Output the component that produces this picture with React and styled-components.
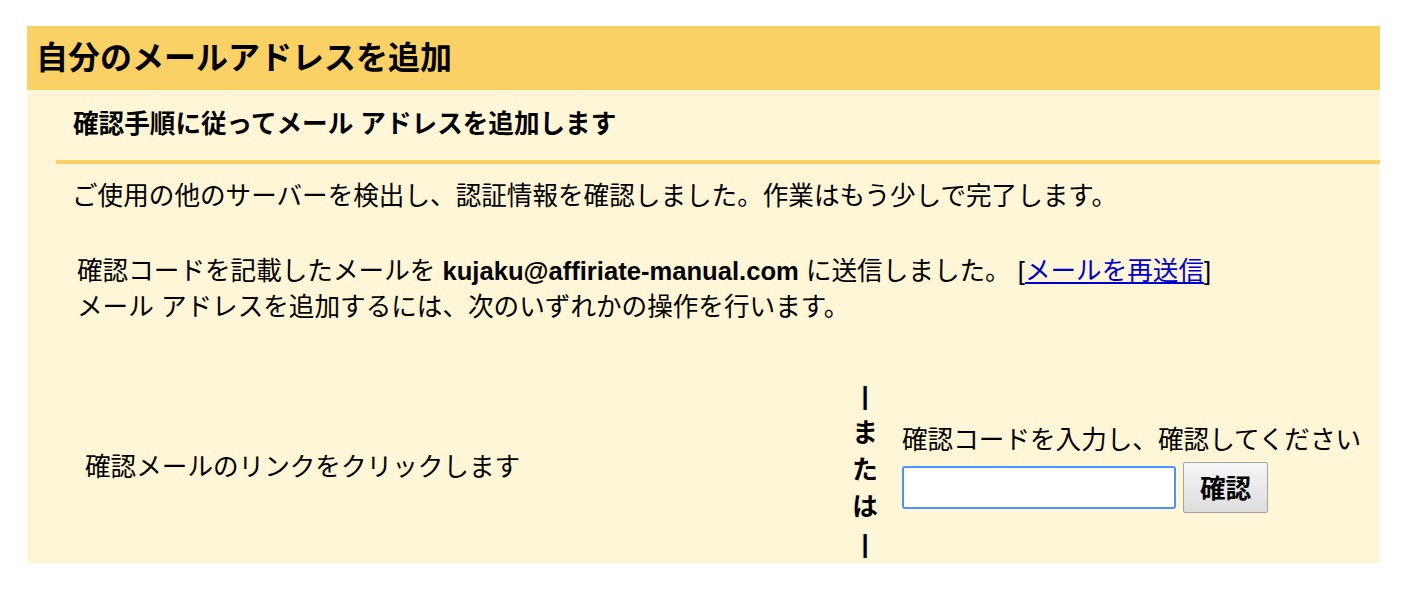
import React, { useState } from 'react';
import styled, { createGlobalStyle } from 'styled-components';

const GlobalStyle = createGlobalStyle`
  body {
    margin: 0;
    background: #ffffff;
    color: #000000;
    font-family: "Liberation Sans", "Noto Sans CJK JP", sans-serif;
  }
`;

const Page = styled.div`
  padding: 26px 0 0 27px;
  width: 1353px;
`;

const Title = styled.h2`
  margin: 0;
  height: 64px;
  padding: 0 0 7px 9px;
  box-sizing: border-box;
  display: flex;
  align-items: center;
  background-color: #fad165;
  font-size: 32px;
  font-weight: bold;
`;

const Body = styled.div`
  background-color: #fff6d7;
  font-size: 25.6px;
  line-height: 36px;
`;

const StepTitle = styled.div`
  padding: 16px 0 18px 46px;
  font-weight: bold;
`;

const Divider = styled.div`
  margin-left: 29px;
  height: 4px;
  background-color: #fad165;
`;

const Intro = styled.p`
  margin: 14px 0 0 45px;
`;

const Message = styled.p`
  margin: 39px 0 0 50px;
`;

const Email = styled.b`
  font-weight: bold;
`;

const ResendLink = styled.a`
  color: #0000cc;
  text-decoration: underline;
  cursor: pointer;
`;

const Options = styled.div`
  display: flex;
  align-items: center;
  height: 192px;
  margin-top: 46px;
  padding-left: 50px;
`;

const LinkOption = styled.div`
  width: 775px;
  padding-left: 8px;
  box-sizing: border-box;
`;

const OrColumn = styled.div`
  width: 26px;
  display: flex;
  flex-direction: column;
  align-items: center;
  font-weight: bold;
  line-height: 37px;
  padding-top: 6px;
`;

const CodeOption = styled.div`
  margin-left: 24px;
  display: flex;
  flex-direction: column;
  gap: 4px;
`;

const CodeForm = styled.div`
  display: flex;
  align-items: center;
  gap: 7px;
`;

const CodeInput = styled.input`
  width: 274px;
  height: 43px;
  box-sizing: border-box;
  border: 2px solid #4d90fe;
  border-radius: 3px;
  background: #ffffff;
  outline: none;
  font-size: 20px;
  padding: 0 6px;
`;

const ConfirmButton = styled.button`
  width: 85px;
  height: 51px;
  border: 1px solid #a3a3a3;
  border-radius: 2px;
  background: linear-gradient(#f6f6f6, #dddddd);
  font-family: "Liberation Sans", "Noto Sans CJK JP", sans-serif;
  font-size: 25.6px;
  font-weight: bold;
  color: #000000;
  cursor: pointer;
  padding: 0 0 2px;
`;

const orChars = ['|', 'ま', 'た', 'は', '|'];

export default function App() {
  const [code, setCode] = useState('');

  return (
    <>
      <GlobalStyle />
      <Page>
        <Title>自分のメールアドレスを追加</Title>
        <Body>
          <StepTitle>確認手順に従ってメール アドレスを追加します</StepTitle>
          <Divider />
          <Intro>ご使用の他のサーバーを検出し、認証情報を確認しました。作業はもう少しで完了します。</Intro>
          <Message>
            確認コードを記載したメールを <Email>kujaku@affiriate-manual.com</Email> に送信しました。 [
            <ResendLink>メールを再送信</ResendLink>]
            <br />
            メール アドレスを追加するには、次のいずれかの操作を行います。
          </Message>
          <Options>
            <LinkOption>確認メールのリンクをクリックします</LinkOption>
            <OrColumn>
              {orChars.map((c, i) => (
                <span key={i}>{c}</span>
              ))}
            </OrColumn>
            <CodeOption>
              <span>確認コードを入力し、確認してください</span>
              <CodeForm>
                <CodeInput value={code} onChange={(e) => setCode(e.target.value)} />
                <ConfirmButton>確認</ConfirmButton>
              </CodeForm>
            </CodeOption>
          </Options>
        </Body>
      </Page>
    </>
  );
}
